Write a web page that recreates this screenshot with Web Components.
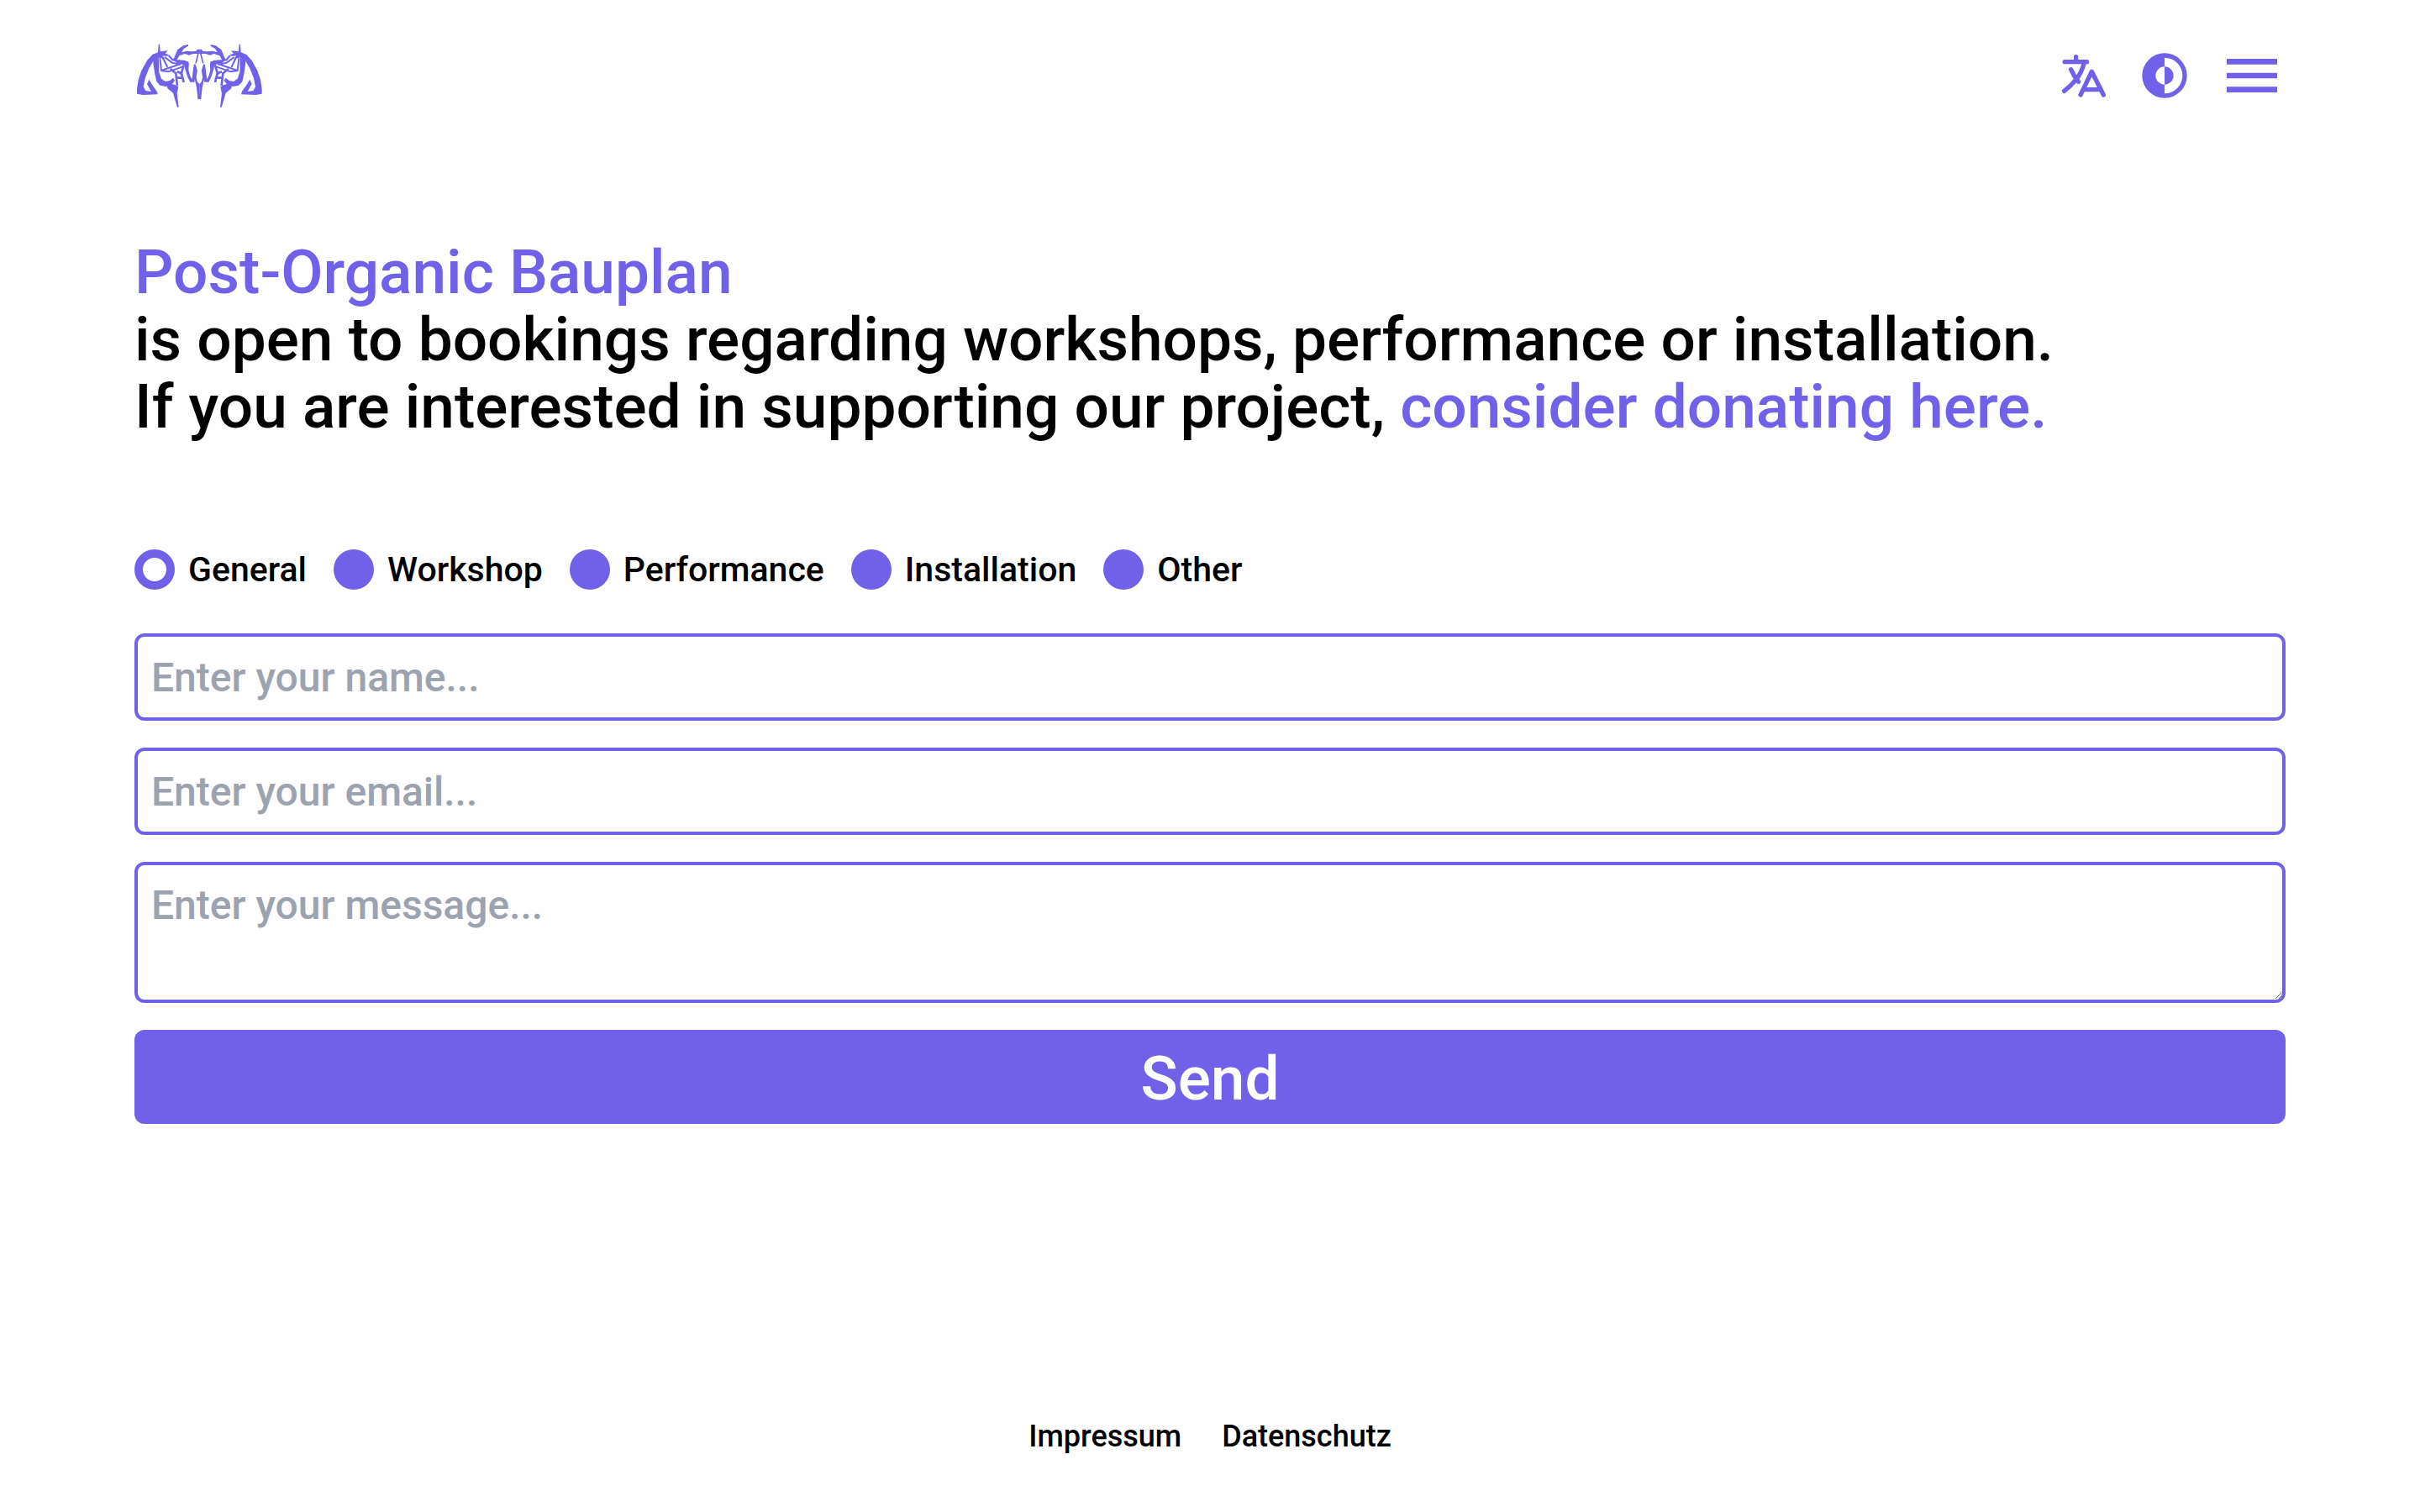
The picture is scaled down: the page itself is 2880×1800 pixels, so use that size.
<!DOCTYPE html>
<html lang="en">
<head>
<meta charset="utf-8">
<meta name="viewport" content="width=device-width, initial-scale=1">
<title>Post-Organic Bauplan</title>
<style>
    :root {
        --accent: #7160e8;
        --placeholder: #9ca3af;
        --gutter: 160px;
    }
    body {
        margin: 0;
        background: #fefefe;
        color: #000;
        font-family: Roboto, "Liberation Sans", sans-serif;
        font-weight: 500;
    }
</style>
</head>
<body>
<contact-page></contact-page>

<script>
class SiteLogo extends HTMLElement {
    constructor() {
        super();
        this.attachShadow({ mode: 'open' });
        this.shadowRoot.innerHTML = `
            <style>
            :host { display: block; }
            a { display: block; color: var(--accent); }
            svg { display: block; width: 155px; height: 80px; }
            </style>
            <a href="#" aria-label="Home">
                <svg viewBox="30 30 465 240" fill="currentColor" aria-hidden="true">
                    <defs>
                        <g id="half">
                            <!-- outer wing and its foot -->
                            <path d="M118 66L95 74 75 96 55 132 44 165 39 198V215L60 219 113 217 110 206 97 188 82 164 75 180 90 207 70 204 62 190 68 160 82 124 102 90z"/>
                            <!-- inner band -->
                            <path d="M95 76L98 112 103 145 109 172 122 185 142 189 162 184 174 168 168 158 156 168 140 171 126 161 118 138 116 74z"/>
                            <!-- crown and spike -->
                            <path d="M116 38H120L122 64 149 61 140 71 153 75 147 81 130 79 140 92 118 84 95 78 114 67z"/>
                            <!-- horn -->
                            <path d="M222 39L204 43 184 57 172 86 164 96 178 100 190 79 210 72 224 77 240 72 262 72V56H254L250 63 234 64 216 62 198 67 206 54 222 44z"/>
                            <!-- fang -->
                            <path d="M146 184L164 180 176 184 187 190 182 214 188 262 183 264 168 212 148 196z"/>
                            <g fill="none" stroke="currentColor" stroke-width="6">
                                <path d="M120 78L126 132 196 108M130 84L148 120M138 84L164 104 196 110M128 133L152 136 202 118M152 78L168 96"/>
                                <path d="M158 126L178 142 183 186M182 136L198 142 206 174M206 112L196 148M178 158H198" stroke-width="8"/>
                                <path d="M218 100L218 132 224 152 232 168 240 168 243 142 246 118" stroke-width="10"/>
                                <path d="M260 62L249 106" stroke-width="5"/>
                                <path d="M244 110L251 132 247 156 255 190 260 234" stroke-width="7"/>
                            </g>
                            <!-- cheek -->
                            <path d="M168 93L190 94 212 96 224 106 222 132 212 132 208 112 180 104z"/>
                            <path d="M254 172L262 180V234H258z"/>
                        </g>
                    </defs>
                    <use href="#half"/>
                    <use href="#half" transform="translate(524 0) scale(-1 1)"/>
                </svg>
            </a>
        `;
    }
}

class IconButton extends HTMLElement {
    constructor() {
        super();
        this.attachShadow({ mode: 'open' });
        this.shadowRoot.innerHTML = `
            <style>
            :host { display: block; }
            button { display: block; padding: 0; border: 0; background: none; color: var(--accent); cursor: pointer; }
            ::slotted(svg) { display: block; width: var(--icon-size, 64px); height: var(--icon-size, 64px); }
            </style>
            <button type="button"><slot></slot></button>
        `;
    }

    connectedCallback() {
        this.shadowRoot.querySelector('button').setAttribute('aria-label', this.getAttribute('label'));
    }
}

class SiteHeader extends HTMLElement {
    constructor() {
        super();
        this.attachShadow({ mode: 'open' });
        this.shadowRoot.innerHTML = `
            <style>
            :host { display: block; }
            header { display: flex; align-items: center; justify-content: space-between; padding: 50px var(--gutter); }
            nav { display: flex; align-items: center; gap: 32px; }
            .menu { --icon-size: 80px; }
            </style>
            <header>
                <site-logo></site-logo>
                <nav>
                    <icon-button label="Language">
                        <svg viewBox="0 0 512 512" fill="none" stroke="currentColor" stroke-width="42" stroke-linecap="round" stroke-linejoin="round">
                            <path d="M73 125h212M181 76v49M261 128c-16 62-44 124-85 172-36 43-72 76-107 103M133 197c18 42 42 82 72 118M224 440l107-222 112 222M252 388h166"/>
                        </svg>
                    </icon-button>
                    <icon-button label="Theme">
                        <svg viewBox="0 0 24 24" fill="currentColor">
                            <path d="M12 2a10 10 0 1 0 0 20 10 10 0 1 0 0-20zm0 18v-4a4 4 0 0 0 0-8V4a8 8 0 1 1 0 16zm0-12v8a4 4 0 0 1 0-8z" fill-rule="evenodd"/>
                        </svg>
                    </icon-button>
                    <icon-button class="menu" label="Menu">
                        <svg viewBox="0 0 24 24" fill="currentColor">
                            <path d="M3 18h18v-2H3v2zm0-5h18v-2H3v2zm0-7v2h18V6H3z"/>
                        </svg>
                    </icon-button>
                </nav>
            </header>
        `;
    }
}

class PageIntro extends HTMLElement {
    constructor() {
        super();
        this.attachShadow({ mode: 'open' });
        this.shadowRoot.innerHTML = `
            <style>
            :host { display: block; font-size: 73px; line-height: 80px; }
            h1, p { margin: 0; font: inherit; }
            h1, ::slotted(a) { color: var(--accent); text-decoration: none; }
            </style>
            <h1><slot name="title"></slot></h1>
            <p><slot></slot></p>
        `;
    }
}

class TopicPicker extends HTMLElement {
    constructor() {
        super();
        this.attachShadow({ mode: 'open' });
        this.shadowRoot.innerHTML = `
            <style>
            :host { display: block; font-size: 41px; line-height: 48px; }
            fieldset { display: flex; flex-wrap: wrap; gap: 32px; margin: 0; padding: 0; border: 0; }
            label { display: flex; align-items: center; gap: 16px; }
            input { appearance: none; width: 48px; height: 48px; margin: 0; border-radius: 50%; background: var(--accent); }
            input:checked { background: none; border: 10px solid var(--accent); }
            </style>
            <fieldset aria-label="Topic"></fieldset>
        `;
    }

    connectedCallback() {
        const topics = this.getAttribute('topics').split(',');
        this.shadowRoot.querySelector('fieldset').innerHTML = topics.map((topic, i) => `
            <label><input type="radio" name="topic" value="${topic}" ${i === 0 ? 'checked' : ''}>${topic}</label>
        `).join('');
    }
}

class FormField extends HTMLElement {
    constructor() {
        super();
        this.attachShadow({ mode: 'open' });
        this.shadowRoot.innerHTML = `
            <style>
            :host { display: block; font-size: 48px; line-height: 64px; }
            input, textarea {
                display: block; box-sizing: border-box; width: 100%; margin: 0; padding: 16px;
                border: 4px solid var(--accent); border-radius: 12px; background: none;
                color: inherit; font: inherit;
            }
            input { height: 104px; }
            textarea { resize: vertical; }
            ::placeholder { color: var(--placeholder); opacity: 1; }
            </style>
        `;
    }

    connectedCallback() {
        const type = this.getAttribute('type');
        const field = document.createElement(type === 'textarea' ? 'textarea' : 'input');
        if (type === 'textarea') {
            field.rows = 2;
        } else {
            field.type = type;
        }
        field.placeholder = this.getAttribute('placeholder');
        field.setAttribute('aria-label', this.getAttribute('label'));
        this.shadowRoot.appendChild(field);
    }
}

class SendButton extends HTMLElement {
    constructor() {
        super();
        this.attachShadow({ mode: 'open' });
        this.shadowRoot.innerHTML = `
            <style>
            :host { display: block; font-size: 73px; line-height: 80px; }
            button {
                display: block; width: 100%; padding: 18px 16px 14px; border: 0; border-radius: 12px;
                background: var(--accent); color: #fff; font: inherit; cursor: pointer;
            }
            </style>
            <button type="submit"><slot></slot></button>
        `;
    }
}

class SiteFooter extends HTMLElement {
    constructor() {
        super();
        this.attachShadow({ mode: 'open' });
        this.shadowRoot.innerHTML = `
            <style>
            :host { display: block; font-size: 36px; line-height: 40px; }
            footer { display: flex; justify-content: center; gap: 48px; padding: 70px var(--gutter); }
            ::slotted(a) { color: inherit; text-decoration: none; }
            </style>
            <footer><slot></slot></footer>
        `;
    }
}

class ContactPage extends HTMLElement {
    constructor() {
        super();
        this.attachShadow({ mode: 'open' });
        this.shadowRoot.innerHTML = `
            <style>
            :host { display: flex; flex-direction: column; min-height: 100vh; }
            main { flex: 1; padding: 104px var(--gutter) 0; }
            form { display: flex; flex-direction: column; gap: 32px; margin-top: 130px; }
            topic-picker { margin-bottom: 20px; }
            </style>
            <site-header></site-header>
            <main>
                <page-intro>
                    <span slot="title">Post-Organic Bauplan</span>
                    is open to bookings regarding workshops, performance or installation.<br>
                    If you are interested in supporting our project, <a href="#donate">consider donating here.</a>
                </page-intro>
                <form>
                    <topic-picker topics="General,Workshop,Performance,Installation,Other"></topic-picker>
                    <form-field type="text" label="Name" placeholder="Enter your name..."></form-field>
                    <form-field type="email" label="Email" placeholder="Enter your email..."></form-field>
                    <form-field type="textarea" label="Message" placeholder="Enter your message..."></form-field>
                    <send-button>Send</send-button>
                </form>
            </main>
            <site-footer>
                <a href="#impressum">Impressum</a>
                <a href="#datenschutz">Datenschutz</a>
            </site-footer>
        `;
    }
}

customElements.define('site-logo', SiteLogo);
customElements.define('icon-button', IconButton);
customElements.define('site-header', SiteHeader);
customElements.define('page-intro', PageIntro);
customElements.define('topic-picker', TopicPicker);
customElements.define('form-field', FormField);
customElements.define('send-button', SendButton);
customElements.define('site-footer', SiteFooter);
customElements.define('contact-page', ContactPage);
</script>
</body>
</html>
